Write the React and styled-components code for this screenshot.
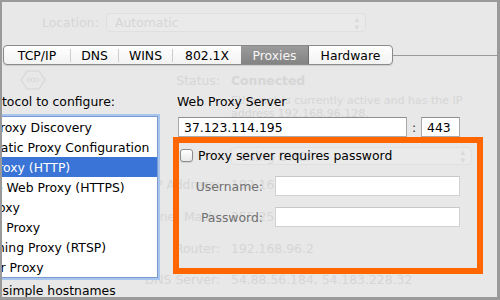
import React from "react";
import styled, { createGlobalStyle } from "styled-components";

const GlobalStyle = createGlobalStyle`
  html, body {
    margin: 0;
    padding: 0;
    background: #fff;
  }
  body {
    font-family: "DejaVu Sans", "Liberation Sans", sans-serif;
  }
`;

const Frame = styled.div`
  box-sizing: border-box;
  width: 500px;
  height: 300px;
  border: solid #9a9a9a;
  border-width: 2px 3px 3px 2px;
  background: #e8e8e8;
  overflow: hidden;
  display: grid;
  grid-template: 1fr / 1fr;
  font-size: 12.4px;

  & > * {
    grid-area: 1 / 1;
    min-width: 0;
  }
`;

/* faded network pane showing through behind the sheet */
const Ghost = styled.div`
  display: flex;
  flex-direction: column;
  color: #d6d6d6;
`;

const LocationRow = styled.div`
  display: flex;
  align-items: center;
  height: 19px;
  margin-top: 11px;
`;

const LocationLabel = styled.div`
  width: 104px;
  padding-left: 40px;
  box-sizing: border-box;
  white-space: nowrap;
`;

const GhostPopup = styled.div`
  box-sizing: border-box;
  width: ${({ w }) => w}px;
  height: ${({ h }) => h}px;
  border: 1px solid #e0e0e0;
  border-radius: 4px;
  background: #eaeaea;
  display: flex;
  align-items: center;
  justify-content: space-between;
  padding: 0 6px 0 8px;
  font-size: 12.4px;
`;

const Arrows = styled.span`
  font-size: 9px;
  line-height: 8px;
  display: flex;
  flex-direction: column;
  color: #dadada;
`;

const GhostLine = styled.div`
  display: flex;
  align-items: center;
  height: ${({ h }) => h || 14}px;
  margin-top: ${({ mt }) => mt}px;
  font-size: ${({ small }) => (small ? "11px" : "12.4px")};
`;

const GhostLabel = styled.div`
  width: 218px;
  flex-shrink: 0;
  display: flex;
  align-items: center;
  justify-content: space-between;
  padding-left: 18px;
  box-sizing: border-box;
  height: 14px;
  white-space: nowrap;
`;

const GhostValue = styled.div`
  margin-left: 11px;
  white-space: nowrap;
  font-weight: ${({ bold }) => (bold ? "bold" : "normal")};
`;

/* the sheet in front */
const Sheet = styled.div`
  display: flex;
  flex-direction: column;
`;

const TabStrip = styled.div`
  display: flex;
  align-items: center;
  height: 20px;
  margin-top: 43px;
  padding-left: 1px;
`;

const TabGroup = styled.div`
  display: flex;
  align-items: center;
  height: 20px;
  box-sizing: border-box;
  border: 1px solid #8a8a8a;
  border-radius: 4px;
  overflow: hidden;
  background: linear-gradient(#ffffff, #f2f2f2);
  box-shadow: 0 1px 1px rgba(0, 0, 0, 0.12);
`;

const Tab = styled.div`
  width: ${({ w }) => w}px;
  height: 100%;
  display: flex;
  align-items: center;
  justify-content: center;
  color: ${({ active }) => (active ? "#f6f6f6" : "#000")};
  background: ${({ active }) =>
    active ? "linear-gradient(#9b9b9b, #838383)" : "transparent"};
  border-right: ${({ active }) => (active ? "1px solid #6f6f6f" : "none")};
  box-sizing: border-box;
`;

const TabSep = styled.div`
  width: 1px;
  height: 13px;
  background: #cdcdcd;
`;

const TabLine = styled.div`
  flex: 1;
  height: 1px;
  background: #9a9a9a;
`;

const Columns = styled.div`
  display: flex;
  margin-top: 30px;
`;

const LeftCol = styled.div`
  width: 171px;
  flex-shrink: 0;
  overflow: hidden;
`;

const LeftInner = styled.div`
  margin-left: -74px;
  width: 245px;
`;

const Caption = styled.div`
  line-height: 14px;
  height: 14px;
  white-space: nowrap;
  color: #000;
  padding-left: ${({ indent }) => indent || 0}px;
`;

const ListBox = styled.div`
  box-sizing: border-box;
  width: 230px;
  margin-top: 7px;
  border: 1px solid #7b9ad0;
  background: #fff;
  box-shadow: 0 0 0 2px #a8c5ee;
`;

const ListRow = styled.div`
  height: 20px;
  display: flex;
  align-items: center;
  white-space: nowrap;
  background: ${({ selected }) => (selected ? "#3a74d6" : "#fff")};
  color: ${({ selected }) => (selected ? "#fff" : "#000")};
`;

const Check = styled.span`
  box-sizing: border-box;
  width: 13px;
  height: 13px;
  flex-shrink: 0;
  margin: 0 ${({ gap }) => gap}px 0 ${({ lead }) => lead || 0}px;
  border: 1px solid #8c8c8c;
  border-radius: 3px;
  background: linear-gradient(#ffffff, #e9e9e9);
  box-shadow: 0 1px 1px rgba(0, 0, 0, 0.1);
`;

const CheckLine = styled.div`
  display: flex;
  align-items: center;
  height: ${({ h }) => h}px;
  margin-top: ${({ mt }) => mt}px;
  white-space: nowrap;
  color: #000;
`;

const RightCol = styled.div`
  display: flex;
  flex-direction: column;
`;

const FieldRow = styled.div`
  display: flex;
  align-items: center;
  height: 20px;
  margin: 8px 0 0 5px;
`;

const TextField = styled.div`
  box-sizing: border-box;
  width: ${({ w }) => w}px;
  height: 20px;
  background: #fff;
  border: 1px solid ${({ dim }) => (dim ? "#d2d2d2" : "#a9a9a9")};
  border-top-color: ${({ dim }) => (dim ? "#c8c8c8" : "#8e8e8e")};
  padding-left: 5px;
  display: flex;
  align-items: center;
  color: #000;
`;

const Colon = styled.div`
  width: 14px;
  text-align: center;
  color: #333;
`;

const OrangeBox = styled.div`
  box-sizing: border-box;
  width: 310px;
  height: 137px;
  border: 6px solid #ff6600;
  padding: 0 0 0 1px;
`;

const FormRow = styled.div`
  display: flex;
  align-items: center;
  margin-top: ${({ mt }) => mt}px;
`;

const FormLabel = styled.div`
  width: 83px;
  margin-right: 12px;
  text-align: right;
  color: #717171;
`;

const EthernetIcon = () => (
  <svg width="26" height="22" viewBox="0 0 26 22">
    <path
      d="M7 2 L19 2 L25 11 L19 20 L7 20 L1 11 Z"
      fill="none"
      stroke="#dadada"
      strokeWidth="1.5"
    />
    <circle cx="9" cy="11" r="1.8" fill="none" stroke="#dadada" />
    <circle cx="13" cy="11" r="1.8" fill="none" stroke="#dadada" />
    <circle cx="17" cy="11" r="1.8" fill="none" stroke="#dadada" />
  </svg>
);

const protocols = [
  "Auto Proxy Discovery",
  "Automatic Proxy Configuration",
  "Web Proxy (HTTP)",
  "Secure Web Proxy (HTTPS)",
  "FTP Proxy",
  "SOCKS Proxy",
  "Streaming Proxy (RTSP)",
  "Gopher Proxy",
];

const tabs = [
  { label: "TCP/IP", w: 66 },
  { label: "DNS", w: 47 },
  { label: "WINS", w: 53 },
  { label: "802.1X", w: 68 },
  { label: "Proxies", w: 68, active: true },
  { label: "Hardware", w: 83 },
];

export default function App() {
  return (
    <>
      <GlobalStyle />
      <Frame>
        <Ghost>
          <LocationRow>
            <LocationLabel>Location:</LocationLabel>
            <GhostPopup w={260} h={19}>
              Automatic
              <Arrows>
                <span>▴</span>
                <span>▾</span>
              </Arrows>
            </GhostPopup>
          </LocationRow>
          <GhostLine mt={41}>
            <GhostLabel>
              <EthernetIcon />
              <span>Status:</span>
            </GhostLabel>
            <GhostValue bold>Connected</GhostValue>
          </GhostLine>
          <GhostLine mt={7} h={13} small>
            <GhostLabel />
            <GhostValue>Ethernet is currently active and has the IP</GhostValue>
          </GhostLine>
          <GhostLine mt={0} h={13} small>
            <GhostLabel />
            <GhostValue>address 192.168.96.128.</GhostValue>
          </GhostLine>
          <GhostLine mt={27} h={18}>
            <GhostLabel />
            <GhostValue>
              <GhostPopup w={241} h={18}>
                Using DHCP
                <Arrows>
                  <span>▴</span>
                  <span>▾</span>
                </Arrows>
              </GhostPopup>
            </GhostValue>
          </GhostLine>
          <GhostLine mt={12}>
            <GhostLabel>
              <span />
              <span>IP Address:</span>
            </GhostLabel>
            <GhostValue>192.168.96.128</GhostValue>
          </GhostLine>
          <GhostLine mt={18}>
            <GhostLabel>
              <span />
              <span>Subnet Mask:</span>
            </GhostLabel>
            <GhostValue>255.255.255.0</GhostValue>
          </GhostLine>
          <GhostLine mt={18}>
            <GhostLabel>
              <span />
              <span>Router:</span>
            </GhostLabel>
            <GhostValue>192.168.96.2</GhostValue>
          </GhostLine>
          <GhostLine mt={17}>
            <GhostLabel>
              <span />
              <span>DNS Server:</span>
            </GhostLabel>
            <GhostValue>54.88.56.184, 54.183.228.32</GhostValue>
          </GhostLine>
        </Ghost>

        <Sheet>
          <TabStrip>
            <TabGroup>
              {tabs.map((t, i) => {
                const next = tabs[i + 1];
                const showSep = next && !t.active && !next.active;
                return (
                  <React.Fragment key={t.label}>
                    <Tab w={t.w} active={t.active}>
                      {t.label}
                    </Tab>
                    {showSep && <TabSep />}
                  </React.Fragment>
                );
              })}
            </TabGroup>
            <TabLine />
          </TabStrip>

          <Columns>
            <LeftCol>
              <LeftInner>
                <Caption>Select a protocol to configure:</Caption>
                <ListBox>
                  {protocols.map((p, i) => (
                    <ListRow key={p} selected={i === 2}>
                      <Check lead={11} gap={7} />
                      {p}
                    </ListRow>
                  ))}
                </ListBox>
                <CheckLine h={14} mt={5}>
                  <Check gap={9} />
                  Exclude simple hostnames
                </CheckLine>
              </LeftInner>
            </LeftCol>

            <RightCol>
              <Caption indent={4}>Web Proxy Server</Caption>
              <FieldRow>
                <TextField w={229}>37.123.114.195</TextField>
                <Colon>:</Colon>
                <TextField w={39}>443</TextField>
              </FieldRow>
              <OrangeBox>
                <CheckLine h={13} mt={6}>
                  <Check gap={5} />
                  Proxy server requires password
                </CheckLine>
                <FormRow mt={14}>
                  <FormLabel>Username:</FormLabel>
                  <TextField w={185} dim />
                </FormRow>
                <FormRow mt={11}>
                  <FormLabel>Password:</FormLabel>
                  <TextField w={185} dim />
                </FormRow>
              </OrangeBox>
            </RightCol>
          </Columns>
        </Sheet>
      </Frame>
    </>
  );
}
